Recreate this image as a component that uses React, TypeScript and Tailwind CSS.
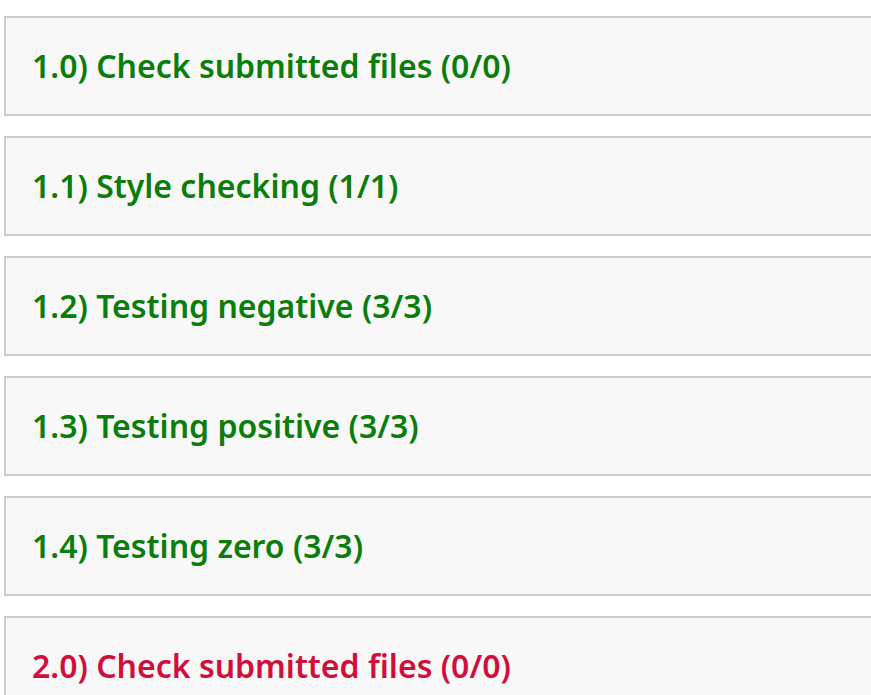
const results = [
  { label: '1.0) Check submitted files (0/0)', ok: true },
  { label: '1.1) Style checking (1/1)', ok: true },
  { label: '1.2) Testing negative (3/3)', ok: true },
  { label: '1.3) Testing positive (3/3)', ok: true },
  { label: '1.4) Testing zero (3/3)', ok: true },
  { label: '2.0) Check submitted files (0/0)', ok: false },
];

function ResultRow({ label, ok }: { label: string; ok: boolean }) {
  return (
    <div className="flex h-[100px] shrink-0 items-center border-2 border-[#cccccc] bg-[#f8f8f8] pl-[26px]">
      <span
        className={`text-[32px] font-semibold leading-none ${ok ? 'text-[#0a7d0a]' : 'text-[#d0103a]'}`}
      >
        {label}
      </span>
    </div>
  );
}

export default function App() {
  return (
    <div
      className="flex h-[695px] w-[871px] flex-col gap-5 overflow-hidden bg-white pl-1 pt-4"
      style={{ fontFamily: '"Noto Sans", sans-serif' }}
    >
      <div className="-mr-10 flex flex-col gap-5">
        {results.map((r) => (
          <ResultRow key={r.label} label={r.label} ok={r.ok} />
        ))}
      </div>
    </div>
  );
}
